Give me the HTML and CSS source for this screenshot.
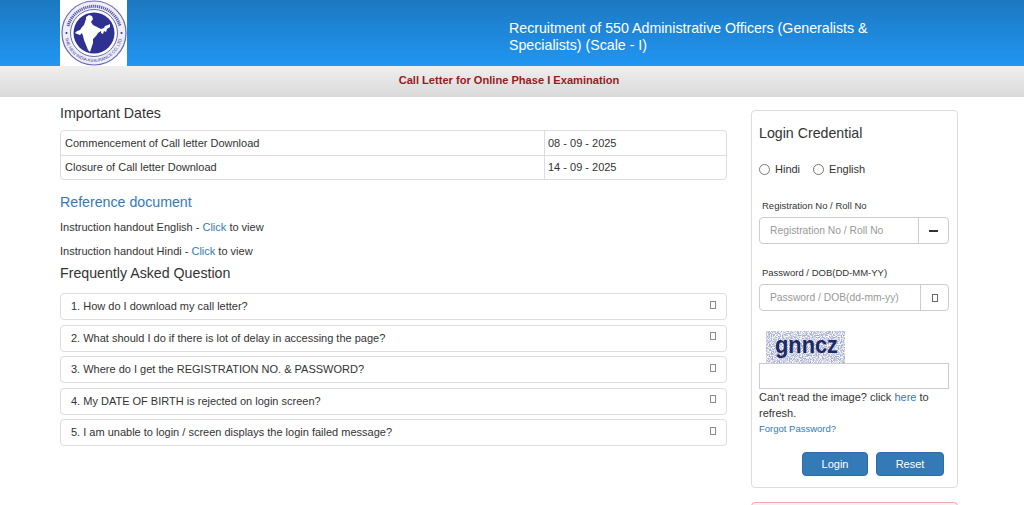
FILE: index.html
```html
<!DOCTYPE html>
<html lang="en">
<head>
    <meta charset="UTF-8">
    <title>Call Letter for Online Phase I Examination</title>
    <link rel="stylesheet" href="styles.css">
</head>
<body>
    <header class="top-bar">
        <div class="logo-box">
            <svg width="67" height="66" viewBox="0 0 67 66">
                <defs>
                    <path id="ring" d="M4.5 33A29 29 0 0 0 62.5 33"/>
                </defs>
                <circle cx="34" cy="33" r="32" fill="#eeeef8" stroke="#6a6ab4" stroke-width="1.2"/>
                <path class="logo-script" d="M8 26A27 27 0 0 1 60 26"/>
                <circle cx="6.5" cy="33" r="1" fill="#2e3192"/>
                <circle cx="61.5" cy="33" r="1" fill="#2e3192"/>
                <circle cx="34" cy="33" r="23.5" fill="#fff" stroke="#6a6ab4" stroke-width="1"/>
                <circle cx="34" cy="33" r="20.5" fill="#2e3192"/>
                <text class="logo-ring"><textPath href="#ring" startOffset="50%">THE NEW INDIA ASSURANCE CO. LTD.</textPath></text>
                <path fill="#fff" d="M26 17L29 15L32 16L33 19L31 22L33 25L37 27L41 29L44 28L45 26L48 25L50 24L50 27L47 29L46 32L44 31L43 34L41 33L41 31L38 33L36 36L33 39L33 43L31 49L30 52L28 50L26 45L24 40L23 36L22 33L20 35L17 34L15 33L17 31L20 30L22 27L24 25L25 22L26 19Z"/>
            </svg>
        </div>
        <h1 class="post-title">Recruitment of 550 Administrative Officers (Generalists &amp; Specialists) (Scale - I)</h1>
    </header>
    <div class="sub-bar">Call Letter for Online Phase I Examination</div>

    <div class="container">
        <main class="left-col">
            <h2 class="dates-title">Important Dates</h2>
            <div class="dates-box">
                <div class="date-row">
                    <div class="date-name">Commencement of Call letter Download</div>
                    <div class="date-value">08 - 09 - 2025</div>
                </div>
                <div class="date-row">
                    <div class="date-name">Closure of Call letter Download</div>
                    <div class="date-value">14 - 09 - 2025</div>
                </div>
            </div>

            <h2 class="ref-title">Reference document</h2>
            <p class="ref-line">Instruction handout English - <a href="#">Click</a> to view</p>
            <p class="ref-line">Instruction handout Hindi - <a href="#">Click</a> to view</p>

            <h2 class="faq-title">Frequently Asked Question</h2>
            <div class="faq-item"><span>1. How do I download my call letter?</span><i class="tofu"></i></div>
            <div class="faq-item"><span>2. What should I do if there is lot of delay in accessing the page?</span><i class="tofu"></i></div>
            <div class="faq-item"><span>3. Where do I get the REGISTRATION NO. &amp; PASSWORD?</span><i class="tofu"></i></div>
            <div class="faq-item"><span>4. My DATE OF BIRTH is rejected on login screen?</span><i class="tofu"></i></div>
            <div class="faq-item"><span>5. I am unable to login / screen displays the login failed message?</span><i class="tofu"></i></div>
        </main>

        <aside class="right-col">
            <form class="login-panel">
                <h3 class="login-title">Login Credential</h3>
                <div class="lang-row">
                    <label><input type="radio" name="lang"> Hindi</label>
                    <label><input type="radio" name="lang"> English</label>
                </div>

                <label class="field-label">Registration No / Roll No</label>
                <div class="input-group">
                    <input type="text" placeholder="Registration No / Roll No">
                    <span class="addon user-addon"><i class="dash"></i></span>
                </div>

                <label class="field-label second">Password / DOB(DD-MM-YY)</label>
                <div class="input-group">
                    <input type="text" placeholder="Password / DOB(dd-mm-yy)">
                    <span class="addon pass-addon"><i class="tofu dark"></i></span>
                </div>

                <svg class="captcha" width="79" height="32" viewBox="0 0 79 32">
                    <defs>
                        <filter id="noise" x="0" y="0" width="100%" height="100%">
                            <feTurbulence type="fractalNoise" baseFrequency="0.9" numOctaves="2" seed="7"/>
                            <feColorMatrix values="0 0 0 0 0.36  0 0 0 0 0.40  0 0 0 0 0.62  2.4 2.4 0 0 -1.9"/>
                        </filter>
                    </defs>
                    <rect width="79" height="32" fill="#fff"/>
                    <rect width="79" height="32" filter="url(#noise)"/>
                    <text class="captcha-text" x="9" y="22" textLength="63" lengthAdjust="spacingAndGlyphs">gnncz</text>
                </svg>
                <input class="captcha-input" type="text">
                <p class="refresh-line">Can't read the image? click <a href="#">here</a> to<br>refresh.</p>
                <a class="forgot" href="#">Forgot Password?</a>

                <div class="btn-row">
                    <button class="btn login-btn" type="button">Login</button>
                    <button class="btn reset-btn" type="button">Reset</button>
                </div>
            </form>
            <div class="alert-panel"></div>
        </aside>
    </div>
</body>
</html>
```

FILE: styles.css
```css
html, body {
    height: 505px;
    overflow: hidden;
}
body {
    font-family: "Liberation Sans", Arial, sans-serif;
    font-size: 11px;
    color: #333;
    background-color: #fff;
    margin: 0;
    padding: 0;
}
a {
    color: #337ab7;
    text-decoration: none;
}

/* header */
.top-bar {
    height: 66px;
    padding-left: 60px;
    display: flex;
    background: linear-gradient(to bottom, #1c78c0, #2196f3);
}
.logo-box {
    width: 67px;
    height: 66px;
    background-color: #fff;
}
.post-title {
    width: 385px;
    margin: 20px 0 0 382px;
    font-size: 14.2px;
    font-weight: normal;
    line-height: 17px;
    color: #fff;
}
.logo-ring {
    font-size: 4.4px;
    fill: #3b3b96;
    text-anchor: middle;
}
.logo-script {
    fill: none;
    stroke: #5a5aa8;
    stroke-width: 3;
    stroke-dasharray: 1.2 0.8;
}
.sub-bar {
    height: 31px;
    padding-right: 6px;
    line-height: 29px;
    text-align: center;
    font-size: 11.1px;
    font-weight: bold;
    color: #991b1b;
    background: linear-gradient(to bottom, #efefef, #d9d9d9);
}

/* layout */
.container {
    display: flex;
    gap: 24px;
    padding: 0 66px 0 60px;
}
.left-col {
    width: 667px;
    flex: none;
}
.right-col {
    width: 207px;
    flex: none;
    padding-top: 13px;
}

/* dates */
.dates-title, .ref-title, .faq-title {
    margin: 0;
    font-weight: normal;
    font-size: 14.2px;
    line-height: 18px;
}
.dates-title {
    margin-top: 7px;
}
.dates-box {
    margin-top: 8px;
    border: 1px solid #ddd;
    border-radius: 4px;
}
.date-row {
    display: flex;
    height: 24px;
    line-height: 24px;
}
.date-row + .date-row {
    height: 23px;
    line-height: 23px;
    border-top: 1px solid #ddd;
}
.date-name {
    width: 479px;
    padding-left: 4px;
    border-right: 1px solid #ddd;
}
.date-value {
    padding-left: 3px;
}
.ref-title {
    margin-top: 13px;
    color: #337ab7;
}
.ref-line {
    margin: 8px 0 0;
    line-height: 17px;
}
.ref-line + .ref-line {
    margin-top: 7px;
}
.faq-title {
    margin-top: 4px;
    margin-bottom: 11px;
}

/* faq */
.faq-item {
    height: 25px;
    margin-bottom: 4.5px;
    padding: 0 10px;
    display: flex;
    justify-content: space-between;
    align-items: center;
    line-height: 25px;
    border: 1px solid #ddd;
    border-radius: 4px;
}
.tofu {
    width: 4px;
    height: 6px;
    margin-bottom: 4px;
    border: 1px solid #8a8a9c;
    display: block;
}
.tofu.dark {
    margin: 0;
    border-color: #666;
}

/* login */
.login-panel {
    height: 378px;
    box-sizing: border-box;
    padding: 0 8px 0 7px;
    border: 1px solid #ddd;
    border-radius: 4px;
}
.login-title {
    margin: 13px 0 0;
    font-size: 14.2px;
    font-weight: normal;
    line-height: 18px;
}
.lang-row {
    display: flex;
    gap: 13px;
    margin-top: 19px;
    line-height: 16px;
}
.lang-row label {
    display: flex;
    align-items: center;
    gap: 5px;
}
.lang-row input {
    appearance: none;
    width: 11px;
    height: 11px;
    margin: 0;
    border: 1px solid #777;
    border-radius: 50%;
    background-color: #fff;
}
.field-label {
    display: block;
    margin: 22px 0 0 3px;
    font-size: 9.5px;
    line-height: 14px;
}
.field-label.second {
    margin-top: 22px;
}
.input-group {
    display: flex;
    height: 27px;
    margin-top: 4px;
    box-sizing: border-box;
    border: 1px solid #ccc;
    border-radius: 4px;
}
.input-group input {
    flex: 1;
    min-width: 0;
    padding: 0 10px;
    border: none;
    background: none;
    font-family: inherit;
    font-size: 10.3px;
    color: #555;
}
.input-group input::placeholder {
    color: #999;
}
.addon {
    flex: none;
    display: flex;
    align-items: center;
    justify-content: center;
    border-left: 1px solid #ccc;
}
.user-addon {
    width: 29px;
}
.pass-addon {
    width: 27px;
}
.dash {
    width: 9px;
    height: 2px;
    background-color: #333;
    display: block;
}
.captcha {
    display: block;
    margin: 20px 0 0 7px;
}
.captcha-text {
    font-family: "Liberation Sans", Arial, sans-serif;
    font-size: 24px;
    font-weight: bold;
    fill: #1b2a66;
}
.captcha-input {
    display: block;
    width: 190px;
    height: 26px;
    box-sizing: border-box;
    border: 1px solid #ccc;
    background: #fff;
}
.refresh-line {
    margin: 0;
    line-height: 16px;
}
.forgot {
    display: block;
    margin-top: 0;
    font-size: 9.5px;
    line-height: 16px;
}
.btn-row {
    display: flex;
    justify-content: flex-end;
    gap: 8px;
    margin: 15px 5px 0 0;
}
.btn {
    height: 24px;
    padding: 0;
    border: 1px solid #2e6da4;
    border-radius: 4px;
    background-color: #337ab7;
    color: #fff;
    font-family: inherit;
    font-size: 11px;
}
.login-btn {
    width: 66px;
}
.reset-btn {
    width: 68px;
}
.alert-panel {
    height: 40px;
    margin-top: 14px;
    border: 1px solid #f5a8a8;
    border-radius: 4px;
    background-color: #fdf2f2;
}
```
